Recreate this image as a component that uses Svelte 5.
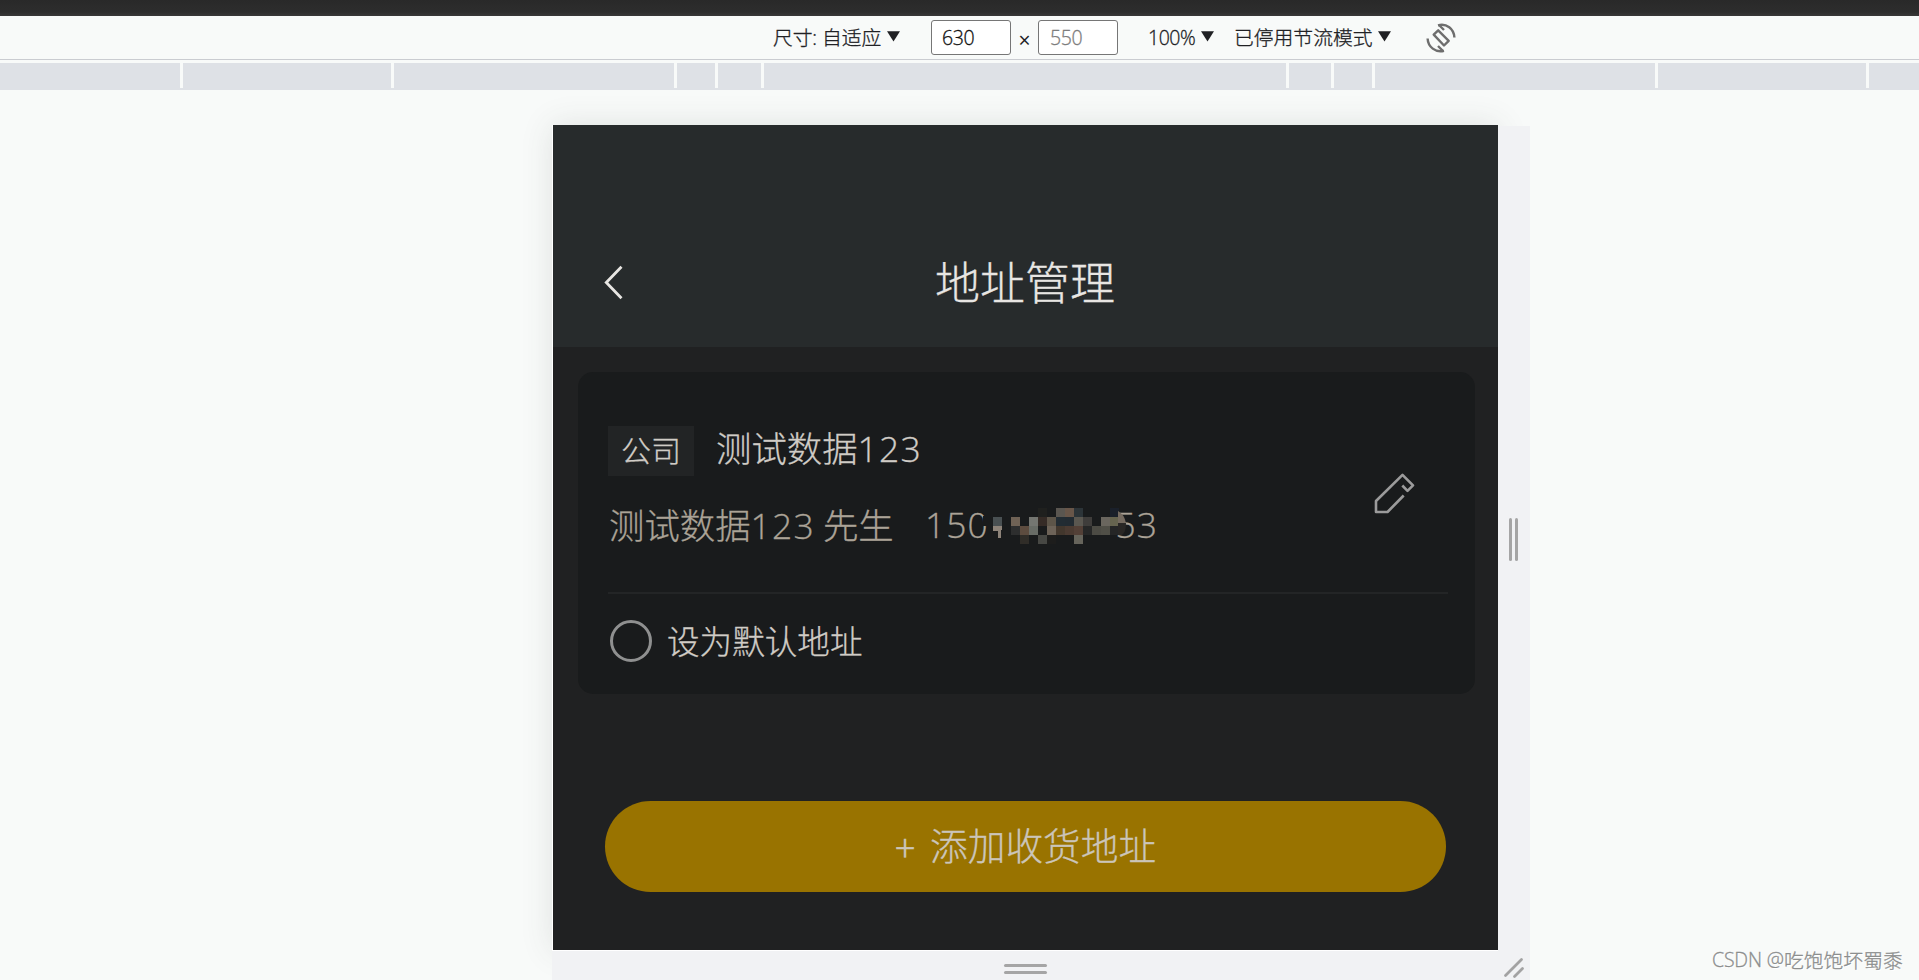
<script>
  const segments = [180, 208, 280, 38, 43, 522, 42, 38, 280, 208, 50];

  // Obscured digits: [column, row, colour] on a 9px grid
  const mosaic = [
    [0, 1, '#495052'],
    [2, 1, '#6f6255'], [2, 2, '#2d2e2e'],
    [3, 2, '#5d4c3f'], [3, 3, '#302d28'],
    [4, 1, '#747671'], [4, 2, '#686c66'],
    [5, 0, '#1f201e'], [5, 1, '#352b26'], [5, 3, '#474844'],
    [6, 1, '#5d5549'], [6, 2, '#6d6358'], [6, 3, '#1d1d1c'],
    [7, 0, '#5a5650'], [7, 1, '#222c33'], [7, 2, '#42372d'],
    [8, 0, '#685649'], [8, 1, '#222b32'], [8, 2, '#4b3b32'],
    [9, 0, '#2c3438'], [9, 1, '#5a5750'], [9, 2, '#534037'], [9, 3, '#66645b'],
    [10, 1, '#3f3d3b'], [10, 2, '#262727'],
    [11, 2, '#4c4b44'],
    [12, 1, '#6a665e'], [12, 2, '#504f47'],
    [13, 0, '#1a202a'], [13, 1, '#66644f'], [13, 2, '#252626']
  ];
</script>

{#snippet caret()}
  <svg class="caret" width="13" height="11" viewBox="0 0 13 11"><path d="M0 .3h13L6.5 10.500z" fill="#202124" /></svg>
{/snippet}

<div class="screen">
  <div class="topbar"></div>
  <div class="toolbar">
    <span class="label size">尺寸: 自适应</span>
    {@render caret()}
    <div class="field first">630</div>
    <span class="times">×</span>
    <div class="field muted">550</div>
    <span class="label zoom">100%</span>
    {@render caret()}
    <span class="label throttle">已停用节流模式</span>
    {@render caret()}
    <svg class="rotate" width="30" height="30" viewBox="0 0 30 30" fill="none" stroke="#6e6e6e" stroke-width="2.4">
      <path d="M7.700 11.700 12.200 7.300 22.700 17.800 18 22.500z" stroke-linejoin="round" />
      <path d="M12 2.300C20.500-.2 28 6 28.400 14.500M18 27.800C9.500 30 2 24 1.600 15.500" />
      <path d="M13 2l5 5M17 28l-5-5" stroke-width="2.400" />
    </svg>
  </div>
  <div class="ruler">
    {#each segments as width}
      <i style:width="{width}px"></i>
    {/each}
  </div>

  <div class="stage">
    <div class="frame">
      <div class="device">
        <header>
          <svg class="back" width="20" height="36" viewBox="0 0 20 36"><path d="M17.500 1.800 2.300 17.500 17.500 33.200" fill="none" stroke="#e8e6e3" stroke-width="2.800" /></svg>
          <h1>地址管理</h1>
        </header>
        <main>
          <section class="card">
            <div class="details">
              <div class="info">
                <div class="line place">
                  <span class="tag">公司</span>
                  <span class="title">测试数据<b>123</b></span>
                </div>
                <div class="line person">
                  <span class="name">测试数据<b>123</b> 先生</span>
                  <span class="phone">
                    <b>150</b><b class="tail">53</b>
                    <svg class="mosaic" width="150" height="40" viewBox="0 0 150 40" shape-rendering="crispEdges">
                      <path d="M0 8h9v24H4V18H0z" fill="#191b1c" />
                      <path d="M10 18h9v4h-1v8h-3.500v-7H10z" fill="#8d8379" />
                      {#each mosaic as [col, row, fill]}
                        <rect x={10 + col * 9} y={row * 9} width="9" height="9" {fill} />
                      {/each}
                      <path d="M135 3q6 3 8 12h-8z" fill="#756b60" shape-rendering="auto" />
                      <path d="M135 15h8q0 9-4 12h-4z" fill="#292725" shape-rendering="auto" />
                    </svg>
                  </span>
                </div>
              </div>
              <svg class="edit" width="42" height="42" viewBox="0 0 42 42" fill="none" stroke="#9b9b9b" stroke-width="2.600">
                <path d="M29.700 22.500 13.500 39H2V28L28.500 1.800 39 12.300 33.500 17.800 28.300 12.500" stroke-linejoin="round" />
              </svg>
            </div>
            <div class="default">
              <span class="radio"></span>
              <span class="option">设为默认地址</span>
            </div>
          </section>
          <div class="add"><span class="plus">+</span><span>添加收货地址</span></div>
        </main>
      </div>
      <div class="grip right"><i></i><i></i></div>
      <div class="grip bottom"><i></i><i></i></div>
      <div class="corner">
        <svg width="22" height="22" viewBox="0 0 22 22" stroke="#a3a3a3" stroke-width="2.800" stroke-linecap="round"><path d="M2.500 18.500 18.500 2.500M11.500 19.500 19.500 11.500" /></svg>
      </div>
    </div>
    <div class="credit"><span>CSDN @</span>吃饱饱坏蜀黍</div>
  </div>
</div>

<style>
  :global(body) { margin: 0; overflow: hidden; background: #f8faf9; }
  * { box-sizing: border-box; }
  .screen {
    width: 1919px; height: 980px; overflow: hidden; display: flex; flex-direction: column;
    background: #f8faf9; color: #202124;
    font-family: "Noto Sans CJK SC Light", "Noto Sans CJK SC", sans-serif; font-weight: 300;
    white-space: nowrap; -webkit-text-stroke: .3px currentColor;
  }
  svg { display: block; flex: none; }
  .topbar { height: 16px; flex: none; background: linear-gradient(#292929, #2d2d2d 12px, #393838); }
  .toolbar {
    height: 44px; flex: none; display: flex; align-items: center; padding-left: 773px;
    border-bottom: 1px solid #caccd1; font-size: 19.800px;
    font-family: "Open Sans", "Noto Sans CJK SC Light", "Noto Sans CJK SC", sans-serif;
  }
  .label { line-height: 40px; flex: none; }
  .size { width: 114px; letter-spacing: -.1px; }
  .caret { margin-bottom: 2px; }
  .field {
    width: 80px; height: 35px; flex: none; border: 1px solid #767676; border-radius: 3px; background: #fff;
    padding-left: 10px; line-height: 34px; font-size: 19.500px; letter-spacing: -.4px; color: #111;
  }
  .first { margin-left: 31px; }
  .muted { color: #7d7d7d; padding-left: 11px; }
  .times { width: 27px; text-align: center; font-size: 21px; line-height: 36px; padding-top: 5px; font-weight: 400; -webkit-text-stroke: 0; }
  .zoom { margin-left: 30px; width: 53px; letter-spacing: -.5px; font-size: 19.500px; }
  .throttle { margin-left: 20px; width: 144px; }
  .rotate { margin-left: 35px; }
  .ruler { margin-top: 3px; height: 27px; flex: none; display: flex; gap: 3px; border-bottom: 2px solid #dee1e6; }
  .ruler i { background: #dee1e6; flex: none; }
  .stage { flex: none; height: 890px; padding-top: 35px; display: flex; }
  .frame {
    margin-left: 552px; width: 978px; height: 855px; flex: none; display: grid;
    grid-template: 826px 29px / 946px 32px;
  }
  .device {
    display: flex; flex-direction: column; border-left: 1px solid #fff; border-bottom: 1px solid #fff;
    background: #202122; color: #d0ccc6; box-shadow: 0 0 30px rgba(60, 70, 65, .13);
  }
  header { height: 222px; flex: none; background: #272b2c; display: flex; align-items: flex-start; }
  .back { margin: 140px 0 0 51px; }
  h1 {
    margin: 121px 0 0 311px; width: 182px; font-size: 45px; line-height: 70px; font-weight: 300; color: #e8e6e3;
  }
  main { flex: 1; padding: 25px 23px 0 25px; }
  b { font-family: "Open Sans", Lato, sans-serif; font-weight: 300; letter-spacing: 1.300px; }
  .card { height: 322px; border-radius: 15px; background: #191b1c; padding: 0 27px 0 30px; }
  .details { height: 222px; border-bottom: 2px solid #232526; display: flex; justify-content: space-between; }
  .info { padding-top: 54px; }
  .line { display: flex; align-items: center; font-size: 35.400px; height: 50px; }
  .place { gap: 22px; }
  .title { padding-bottom: 9px; }
  .tag {
    width: 86px; height: 50px; background: #222425; text-align: center; font-size: 30px; line-height: 47px;
  }
  .person { margin-top: 25px; padding-left: 1px; color: #aba397; }
  .name { width: 316px; padding-bottom: 6px; }
  .phone { display: flex; position: relative; padding-bottom: 4px; }
  .phone b { letter-spacing: 1px; }
  .phone .tail { margin-left: 127px; }
  .mosaic { position: absolute; left: 58px; top: 8px; }
  .edit { margin: 101px 32px 0 0; }
  .default { display: flex; align-items: center; gap: 15px; padding: 0 0 2px 2px; height: 96px; font-size: 32.600px; }
  .radio { width: 42px; height: 42px; border: 3px solid #8f9090; border-radius: 50%; }
  .option { padding-bottom: 3px; }
  .add {
    margin: 107px 0 0 27px; width: 841px; height: 91px; border-radius: 46px; background: #997300;
    display: flex; align-items: center; padding: 0 0 7px 290px; font-size: 37.700px; color: #cbc5ba;
  }
  .plus { width: 35px; padding-top: 4px; }
  .grip { display: flex; align-items: center; justify-content: center; gap: 3px; position: relative; background: #f1f2f4; }
  .grip i { width: 3px; height: 43px; border-radius: 2px; background: #a5a5a5; }
  .right { margin-top: 1px; padding: 2px 2px 0 0; }
  .bottom { flex-direction: column; gap: 4px; padding-top: 7px; }
  .bottom i { width: 43px; height: 3px; }
  .corner { padding: 6px 0 0 5px; position: relative; background: #f1f2f4; }
  .credit {
    margin: 817px 0 0 182px; display: flex; font-size: 19.800px; line-height: 36px; color: #8c8e8e;
    text-shadow: 1px 1px #fff;
  }
  .credit span { width: 72px; font-family: "Open Sans", sans-serif; font-size: 19.500px; letter-spacing: -.2px; }
</style>
